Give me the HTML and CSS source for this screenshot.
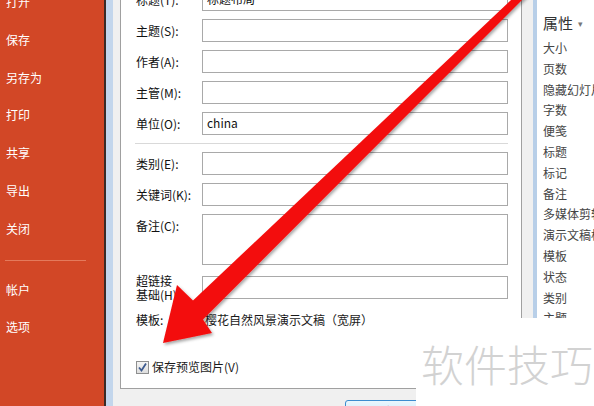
FILE: index.html
```html
<!DOCTYPE html>
<html lang="zh-CN">
<head>
<meta charset="utf-8">
<title>属性</title>
<link rel="stylesheet" href="styles.css">
</head>
<body>
<div class="app">
  <nav class="sidebar">
    <ul class="nav-list">
      <li class="nav-item">打开</li>
      <li class="nav-item">保存</li>
      <li class="nav-item">另存为</li>
      <li class="nav-item">打印</li>
      <li class="nav-item">共享</li>
      <li class="nav-item">导出</li>
      <li class="nav-item">关闭</li>
      <li class="nav-sep"></li>
      <li class="nav-item">帐户</li>
      <li class="nav-item">选项</li>
    </ul>
  </nav>

  <section class="dialog">
    <div class="panel">
      <div class="row"><span class="label">标题(T):</span><div class="field">标题布局</div></div>
      <div class="row"><span class="label">主题(S):</span><div class="field"></div></div>
      <div class="row"><span class="label">作者(A):</span><div class="field"></div></div>
      <div class="row"><span class="label">主管(M):</span><div class="field"></div></div>
      <div class="row"><span class="label">单位(O):</span><div class="field">china</div></div>
      <div class="sep"></div>
      <div class="row"><span class="label">类别(E):</span><div class="field"></div></div>
      <div class="row"><span class="label">关键词(K):</span><div class="field"></div></div>
      <div class="row row-area"><span class="label">备注(C):</span><div class="field area"></div></div>
      <div class="row row-link"><span class="label two"><span class="line">超链接</span><span class="line">基础(H):</span></span><div class="field"></div></div>
      <div class="row row-text"><span class="label">模板:</span><span class="value">樱花自然风景演示文稿（宽屏）</span></div>
      <div class="check-row">
        <span class="checkbox"><svg width="11" height="11" viewBox="0 0 11 11"><path d="M2 5.5 L4.5 8.5 L9 1.5" fill="none" stroke="#3c5a8f" stroke-width="1.8"/></svg></span>
        <span>保存预览图片(V)</span>
      </div>
    </div>
    <div class="buttons">
      <div class="btn btn-default">确定</div>
      <div class="btn">取消</div>
    </div>
  </section>

  <aside class="props">
    <div class="props-head">属性<span class="caret">▾</span></div>
    <ul class="props-list">
      <li>大小</li>
      <li>页数</li>
      <li>隐藏幻灯片</li>
      <li>字数</li>
      <li>便笺</li>
      <li>标题</li>
      <li>标记</li>
      <li>备注</li>
      <li>多媒体剪辑</li>
      <li>演示文稿格式</li>
      <li>模板</li>
      <li>状态</li>
      <li>类别</li>
      <li>主题</li>
    </ul>
  </aside>
</div>

<svg class="arrow" width="594" height="406" viewBox="0 0 594 406">
  <defs>
    <filter id="sh" x="-10%" y="-10%" width="120%" height="120%">
      <feDropShadow dx="1.5" dy="2" stdDeviation="1.5" flood-color="#000" flood-opacity="0.35"/>
    </filter>
  </defs>
  <polygon filter="url(#sh)" fill="#f30b0b" points="521.6,-10 193,300.5 177,285 163,343 212,333 203,319.5 532,-10"/>
</svg>

<div class="watermark">软件技巧</div>
</body>
</html>
```

FILE: styles.css
```css
* { box-sizing: border-box; }

html, body {
  margin: 0;
  padding: 0;
}

body {
  width: 594px;
  height: 406px;
  overflow: hidden;
  position: relative;
  background: #f0f0f0;
  font-family: "Noto Sans CJK SC", "Noto Sans", sans-serif;
  font-size: 12px;
  color: #1a1a1a;
}

ul { list-style: none; margin: 0; padding: 0; }

.app {
  display: flex;
  height: 406px;
  overflow: hidden;
}

/* ---------- left backstage menu ---------- */
.sidebar {
  width: 106px;
  flex: none;
  background: #d24726;
  border-right: 2px solid #3a2a26;
  overflow: hidden;
}

.nav-list {
  margin-top: -17px;
}

.nav-item {
  height: 37.8px;
  line-height: 37.8px;
  padding-left: 6px;
  color: #fff;
  font-size: 12px;
}

.nav-sep {
  height: 1px;
  margin: 12px 18px 10px 5px;
  background: #e47a5c;
}

/* ---------- properties dialog ---------- */
.dialog {
  width: 431px;
  flex: none;
  display: flex;
  flex-direction: column;
  border-left: 7px solid #c3d6ec;
  border-right: 4px solid #b8cfe8;
  padding-left: 7px;
  background: #f0f0f0;
}

.panel {
  width: 402px;
  margin-top: -23px;
  padding: 10px 13px 13px 15px;
  background: #fff;
  border: 1px solid #a0a0a0;
}

.row {
  display: flex;
  align-items: center;
  margin-bottom: 8px;
}

.label {
  width: 66px;
  flex: none;
  line-height: 16px;
  color: #111;
}

.label.two {
  display: flex;
  flex-direction: column;
  line-height: 14px;
}

.field {
  width: 306px;
  height: 23px;
  border: 1px solid #a9a9a9;
  background: #fff;
  padding-left: 4px;
  line-height: 20px;
  color: #111;
}

.field.area {
  height: 51px;
}

.row-area {
  align-items: flex-start;
  margin-bottom: 11px;
}

.row-area .label {
  padding-top: 4px;
}

.row-link {
  height: 23px;
  margin-bottom: 13px;
}

.row-text {
  height: 16px;
  margin-bottom: 31px;
}

.row-text .value {
  padding-left: 3px;
  line-height: 16px;
}

.sep {
  height: 1px;
  margin: 3px 0 8px -1px;
  background: #d9d9d9;
}

.check-row {
  display: flex;
  align-items: center;
  gap: 3px;
  height: 16px;
  line-height: 16px;
}

.checkbox {
  width: 13px;
  height: 13px;
  border: 1px solid #8e8f8f;
  background: linear-gradient(#f4f4f4, #dedede);
  display: flex;
  align-items: center;
  justify-content: center;
}

.buttons {
  display: flex;
  gap: 6px;
  margin-top: 11px;
  padding-left: 225px;
}

.btn {
  width: 75px;
  height: 23px;
  flex: none;
  border: 1px solid #acacac;
  border-radius: 3px;
  background: linear-gradient(#f2f2f2, #dcdcdc);
  text-align: center;
  line-height: 21px;
}

.btn-default {
  border-color: #3c8ccf;
  background: linear-gradient(#eaf6fd, #bee6fd);
}

/* ---------- right properties pane ---------- */
.props {
  flex: 1;
  background: #fff;
  padding-left: 6px;
  overflow: hidden;
  white-space: nowrap;
}

.props-head {
  margin-top: 12px;
  height: 22px;
  line-height: 22px;
  font-size: 15px;
  color: #333;
}

.caret {
  font-size: 9px;
  color: #777;
  margin-left: 5px;
  vertical-align: 2px;
}

.props-list {
  margin-top: 4px;
}

.props-list li {
  height: 20.8px;
  line-height: 20.8px;
  font-size: 12px;
  color: #444;
}

/* ---------- overlays ---------- */
.arrow {
  position: absolute;
  left: 0;
  top: 0;
  pointer-events: none;
}

.watermark {
  position: absolute;
  left: 416px;
  top: 318px;
  width: 178px;
  height: 88px;
  background: #fff;
  padding-left: 5px;
  padding-top: 20px;
  font-size: 43px;
  line-height: 50px;
  font-weight: 300;
  color: #d2d2d2;
  white-space: nowrap;
  overflow: hidden;
}
```
